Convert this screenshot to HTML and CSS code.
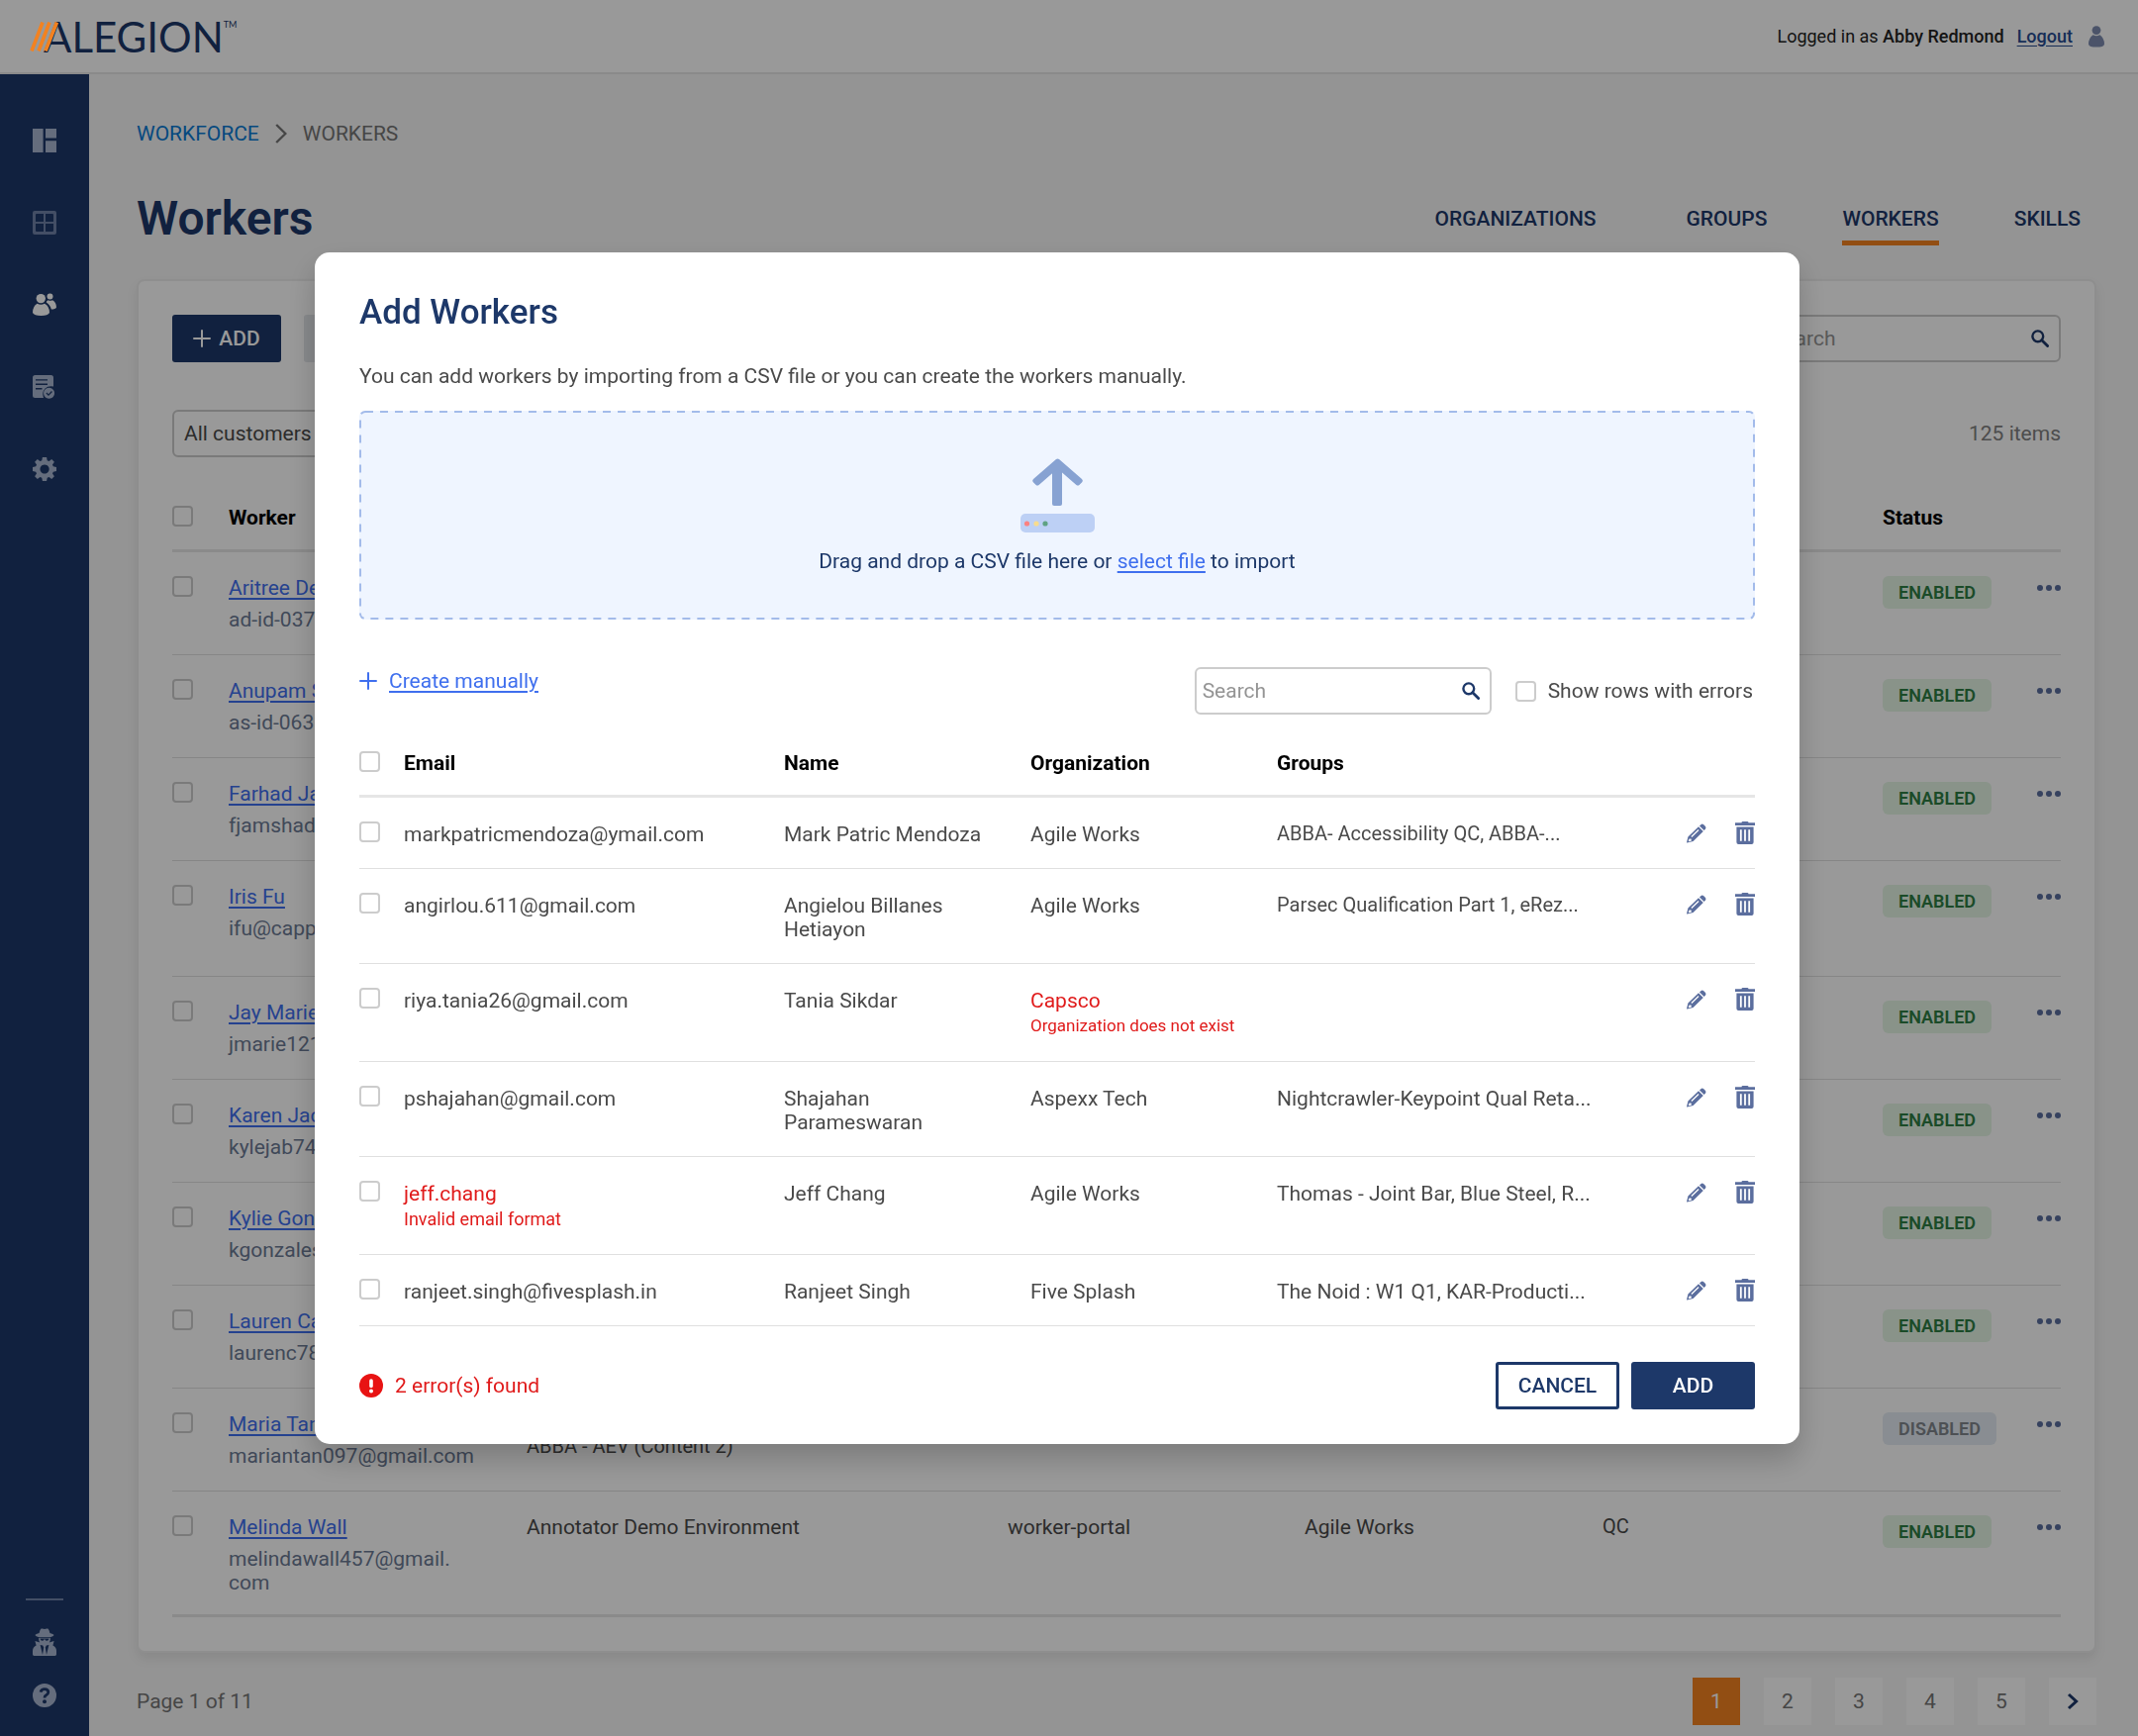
FILE: index.html
```html
<!DOCTYPE html>
<html lang="en">
<head>
    <meta charset="UTF-8">
    <meta name="viewport" content="width=device-width, initial-scale=1.0">
    <title>Alegion - Workers</title>
    <link rel="stylesheet" href="styles.css">
</head>
<body>

    <!-- Shared icons -->
    <svg class="sprite" aria-hidden="true">
        <symbol id="icon-search" viewBox="0 0 18 18">
            <circle cx="6.8" cy="6.8" r="5.4" fill="none" stroke="currentColor" stroke-width="2.4"/>
            <path d="M10.8 10.8L16.6 16.6" stroke="currentColor" stroke-width="2.8" stroke-linecap="round"/>
        </symbol>
        <symbol id="icon-plus" viewBox="0 0 18 18">
            <path d="M9 1V17M1 9H17" stroke="currentColor" stroke-width="2" stroke-linecap="round"/>
        </symbol>
        <symbol id="icon-dots" viewBox="0 0 24 6">
            <circle cx="3" cy="3" r="3"/><circle cx="12" cy="3" r="3"/><circle cx="21" cy="3" r="3"/>
        </symbol>
        <symbol id="icon-edit" viewBox="0 0 20 20">
            <path fill-rule="evenodd" d="M12 3.2L16.8 8L6.6 18L0.4 19.6L0 19.2L1.4 13.4ZM11.6 6L4.4 13L5.3 13.9L12.5 6.9ZM2.6 15.4L1.8 17.6L2.6 18.2L4.8 17.4L4.6 15.6Z"/>
            <path d="M13 2.4L14.6 .9Q15.900 0 17 1L19 3Q20 4.200 19 5.400L17.600 7Z"/>
        </symbol>
        <symbol id="icon-trash" viewBox="0 0 20 23">
            <path d="M6.5 1.2Q6.5 0 7.7 0H12.3Q13.5 0 13.5 1.2H20V4H0V1.2Z"/>
            <path fill-rule="evenodd" d="M1.4 5.6H18.6V21Q18.6 23 16.6 23H3.4Q1.4 23 1.4 21ZM4.9 8.2V19.8H6.7V8.2ZM9.1 8.2V19.8H10.9V8.2ZM13.3 8.2V19.8H15.1V8.2Z"/>
        </symbol>
    </svg>

    <header class="topbar">
        <a href="#" class="logo" aria-label="Alegion">
            <svg class="logo-slashes" width="30" height="30" viewBox="0 0 30 30">
                <path d="M2 29.500L13 .5M9 29.500L20 .5M16 29.500L27.500 .5" stroke="#f38220" stroke-width="3.600"/>
            </svg>
            <span class="logo-name">ALEGION</span>
            <span class="logo-tm">TM</span>
        </a>
        <div class="account">
            <span>Logged in as <strong>Abby Redmond</strong></span>
            <a href="#" class="logout">Logout</a>
            <svg class="avatar" width="16" height="22" viewBox="0 0 16 22">
                <circle cx="8" cy="4.6" r="4.4"/>
                <path d="M4.6 9.2Q8 11.4 11.4 9.2Q16 12.6 16 18.4Q15.6 21.6 8 21.6Q.4 21.6 0 18.4Q0 12.6 4.6 9.2Z"/>
            </svg>
        </div>
    </header>

    <div class="page">
        <nav class="sidebar" aria-label="Main">
            <a href="#" aria-label="Dashboard">
                <svg width="24" height="24" viewBox="0 0 24 24"><path d="M0 0H10.6V24H0ZM13 0H24V9.4H13ZM13 12.2H24V24H13Z"/></svg>
            </a>
            <a href="#" class="muted" aria-label="Projects">
                <svg width="24" height="24" viewBox="0 0 24 24"><path fill-rule="evenodd" d="M2 0H22Q24 0 24 2V22Q24 24 22 24H2Q0 24 0 22V2Q0 0 2 0ZM4 3Q3 3 3 4V11H11V3ZM13 3V11H21V4Q21 3 20 3ZM3 13V20Q3 21 4 21H11V13ZM13 13V21H20Q21 21 21 20V13Z"/></svg>
            </a>
            <a href="#" class="active" aria-label="Workforce">
                <svg width="24" height="24" viewBox="0 0 24 24">
                    <circle cx="8.3" cy="5.6" r="4.7"/>
                    <circle cx="17.5" cy="3.6" r="3"/>
                    <path d="M4.6 10.8Q8.3 12.6 12 10.8Q17 13.4 17 20Q15.5 23 8.5 23Q1.5 23 0 20Q0 13.4 4.6 10.8Z"/>
                    <path d="M13.8 9.6Q13.8 8 15.6 7.2Q17.8 8.4 20 7.2Q24 9.6 24 14.6Q23 16.6 18.8 16.6Q18 12.4 13.8 9.6Z"/>
                </svg>
            </a>
            <a href="#" aria-label="Tasks">
                <svg width="24" height="24" viewBox="0 0 24 24">
                    <path fill-rule="evenodd" d="M2.5 0H18.5Q21 0 21 2.5V11.6Q16 10.4 12.6 13.6Q9 17.6 11 23H2.5Q0 23 0 20.5V2.5Q0 0 2.5 0ZM3 4.2V5.6H15V4.2ZM3 8.6V10H15V8.6ZM3 13V14.4H9.5V13Z"/>
                    <path fill-rule="evenodd" d="M16.6 12.8A5.5 5.5 0 1 1 16.5 12.8ZM14.4 17.6L13.5 18.5L16 21L19.9 17L19 16.1L16 19.2Z"/>
                </svg>
            </a>
            <a href="#" aria-label="Settings">
                <svg width="24" height="24" viewBox="0 0 24 24">
                    <path fill-rule="evenodd" d="M9.9 0H14.1L14.7 3.2L16.6 4L19.2 2.1L21.9 4.8L20 7.4L20.8 9.3L24 9.9V14.1L20.8 14.7L20 16.6L21.9 19.2L19.2 21.9L16.6 20L14.7 20.8L14.1 24H9.9L9.3 20.8L7.4 20L4.8 21.9L2.1 19.2L4 16.6L3.2 14.7L0 14.1V9.9L3.2 9.3L4 7.4L2.1 4.8L4.8 2.1L7.4 4L9.3 3.2ZM12 7.4A4.6 4.6 0 1 0 12.1 7.4Z"/>
                </svg>
            </a>
            <div class="sidebar-bottom">
                <a href="#" aria-label="Impersonate">
                    <svg width="24" height="28" viewBox="0 0 24 28">
                        <path d="M8.6 .6Q10 0 12 1Q14 0 15.4 .6Q16.6 1.6 17.4 5Q21 5.8 21.6 7Q21 8.6 17.6 9.2H6.4Q3 8.6 2.4 7Q3 5.8 6.6 5Q7.4 1.6 8.6 .6Z"/>
                        <path fill-rule="evenodd" d="M6.2 10H17.8V11.6Q17.8 13 16.8 14.4L21.6 13L20.4 17.4Q24 19 24 23V26.6Q24 28 22.6 28H1.4Q0 28 0 26.6V23Q0 19 3.6 17.4L2.4 13L7.2 14.4Q6.2 13 6.2 11.6ZM7.4 10.4Q8 12.8 9.6 12.8Q11.2 12.8 11.6 11.2H12.4Q12.8 12.8 14.4 12.8Q16 12.8 16.6 10.4ZM7.6 17L10 27L11.2 19.6L10.2 17.6ZM16.4 17L14 27L12.8 19.6L13.8 17.6Z"/>
                    </svg>
                </a>
                <a href="#" aria-label="Help">
                    <svg width="24" height="24" viewBox="0 0 24 24">
                        <circle cx="12" cy="12" r="12"/>
                        <path d="M8 8.6Q8.8 5.6 12 5.6Q15.8 5.6 15.8 8.8Q15.8 10.6 13.6 11.8Q12 12.6 12 14.4" fill="none" stroke="#1d3869" stroke-width="2.8"/>
                        <circle cx="12" cy="18.2" r="2" fill="#1d3869"/>
                    </svg>
                </a>
            </div>
        </nav>

        <main class="content">
            <nav class="breadcrumb" aria-label="Breadcrumb">
                <a href="#">WORKFORCE</a>
                <svg width="12" height="20" viewBox="0 0 12 20"><path d="M1.2 1L10.4 10L1.2 19" fill="none" stroke="currentColor" stroke-width="2.4"/></svg>
                <span>WORKERS</span>
            </nav>

            <div class="title-row">
                <h1>Workers</h1>
                <nav class="tabs" aria-label="Workforce">
                    <a href="#" class="tab tab-first">ORGANIZATIONS</a>
                    <a href="#" class="tab">GROUPS</a>
                    <a href="#" class="tab current">WORKERS</a>
                    <a href="#" class="tab">SKILLS</a>
                </nav>
            </div>

            <section class="card">
                <div class="toolbar">
                    <button class="btn btn-primary btn-add"><svg width="18" height="18"><use href="#icon-plus"/></svg>ADD</button>
                    <button class="btn btn-disabled" aria-label="Edit" disabled></button>
                    <div class="search">
                        <input type="text" placeholder="Search" aria-label="Search workers">
                        <svg width="18" height="18"><use href="#icon-search"/></svg>
                    </div>
                </div>
                <div class="filters">
                    <select aria-label="Customer">
                        <option>All customers</option>
                    </select>
                    <span class="count">125 items</span>
                </div>

                <table class="workers">
                    <colgroup>
                        <col class="w-check"><col class="w-worker"><col><col class="w-portal"><col class="w-org"><col class="w-groups"><col class="w-status"><col class="w-more">
                    </colgroup>
                    <thead>
                        <tr>
                            <th><input type="checkbox" aria-label="Select all workers"></th>
                            <th>Worker</th><th>Customers</th><th>Portal</th><th>Organization</th><th>Groups</th><th>Status</th><th></th>
                        </tr>
                    </thead>
                    <tbody>
                        <tr>
                            <td><input type="checkbox" aria-label="Select Aritree Dey"></td>
                            <td><a href="#">Aritree Dey</a><p class="worker-id">ad-id-0371</p></td>
                            <td></td><td></td><td></td><td></td>
                            <td><span class="badge enabled">ENABLED</span></td>
                            <td><button class="more" aria-label="More"><svg width="24" height="6"><use href="#icon-dots"/></svg></button></td>
                        </tr>
                        <tr>
                            <td><input type="checkbox" aria-label="Select Anupam Sen"></td>
                            <td><a href="#">Anupam Sen</a><p class="worker-id">as-id-0632</p></td>
                            <td></td><td></td><td></td><td></td>
                            <td><span class="badge enabled">ENABLED</span></td>
                            <td><button class="more" aria-label="More"><svg width="24" height="6"><use href="#icon-dots"/></svg></button></td>
                        </tr>
                        <tr>
                            <td><input type="checkbox" aria-label="Select Farhad Jamshad"></td>
                            <td><a href="#">Farhad Jamshad</a><p class="worker-id">fjamshad</p></td>
                            <td></td><td></td><td></td><td></td>
                            <td><span class="badge enabled">ENABLED</span></td>
                            <td><button class="more" aria-label="More"><svg width="24" height="6"><use href="#icon-dots"/></svg></button></td>
                        </tr>
                        <tr class="tall">
                            <td><input type="checkbox" aria-label="Select Iris Fu"></td>
                            <td><a href="#">Iris Fu</a><p class="worker-id">ifu@cappen.com</p></td>
                            <td></td><td></td><td></td><td></td>
                            <td><span class="badge enabled">ENABLED</span></td>
                            <td><button class="more" aria-label="More"><svg width="24" height="6"><use href="#icon-dots"/></svg></button></td>
                        </tr>
                        <tr>
                            <td><input type="checkbox" aria-label="Select Jay Marie"></td>
                            <td><a href="#">Jay Marie</a><p class="worker-id">jmarie121</p></td>
                            <td></td><td></td><td></td><td></td>
                            <td><span class="badge enabled">ENABLED</span></td>
                            <td><button class="more" aria-label="More"><svg width="24" height="6"><use href="#icon-dots"/></svg></button></td>
                        </tr>
                        <tr>
                            <td><input type="checkbox" aria-label="Select Karen Jacobs"></td>
                            <td><a href="#">Karen Jacobs</a><p class="worker-id">kylejab74</p></td>
                            <td></td><td></td><td></td><td></td>
                            <td><span class="badge enabled">ENABLED</span></td>
                            <td><button class="more" aria-label="More"><svg width="24" height="6"><use href="#icon-dots"/></svg></button></td>
                        </tr>
                        <tr>
                            <td><input type="checkbox" aria-label="Select Kylie Gonzales"></td>
                            <td><a href="#">Kylie Gonzales</a><p class="worker-id">kgonzales</p></td>
                            <td></td><td></td><td></td><td></td>
                            <td><span class="badge enabled">ENABLED</span></td>
                            <td><button class="more" aria-label="More"><svg width="24" height="6"><use href="#icon-dots"/></svg></button></td>
                        </tr>
                        <tr>
                            <td><input type="checkbox" aria-label="Select Lauren Carter"></td>
                            <td><a href="#">Lauren Carter</a><p class="worker-id">laurenc78</p></td>
                            <td></td><td></td><td></td><td></td>
                            <td><span class="badge enabled">ENABLED</span></td>
                            <td><button class="more" aria-label="More"><svg width="24" height="6"><use href="#icon-dots"/></svg></button></td>
                        </tr>
                        <tr>
                            <td><input type="checkbox" aria-label="Select Maria Tan"></td>
                            <td><a href="#">Maria Tan</a><p class="worker-id">mariantan097@gmail.com</p></td>
                            <td class="small">ABBA - Accessibility QC<br>ABBA - AEV (Content 2)</td><td></td><td></td><td></td>
                            <td><span class="badge disabled">DISABLED</span></td>
                            <td><button class="more" aria-label="More"><svg width="24" height="6"><use href="#icon-dots"/></svg></button></td>
                        </tr>
                        <tr>
                            <td><input type="checkbox" aria-label="Select Melinda Wall"></td>
                            <td><a href="#">Melinda Wall</a><p class="worker-id">melindawall457@gmail.<wbr>com</p></td>
                            <td>Annotator Demo Environment</td><td>worker-portal</td><td>Agile Works</td><td class="small">QC</td>
                            <td><span class="badge enabled">ENABLED</span></td>
                            <td><button class="more" aria-label="More"><svg width="24" height="6"><use href="#icon-dots"/></svg></button></td>
                        </tr>
                    </tbody>
                </table>
            </section>

            <footer class="pager">
                <span>Page 1 of 11</span>
                <div class="pages">
                    <button class="page-btn current">1</button>
                    <button class="page-btn">2</button>
                    <button class="page-btn">3</button>
                    <button class="page-btn">4</button>
                    <button class="page-btn">5</button>
                    <button class="page-btn next" aria-label="Next page">
                        <svg width="12" height="18" viewBox="0 0 12 18"><path d="M2 2L9.6 9L2 16" fill="none" stroke="currentColor" stroke-width="3"/></svg>
                    </button>
                </div>
            </footer>
        </main>
    </div>

    <!-- Add workers dialog -->
    <div class="overlay">
        <div class="modal" role="dialog" aria-modal="true" aria-labelledby="modalTitle">
            <h2 id="modalTitle">Add Workers</h2>
            <p class="intro">You can add workers by importing from a CSV file or you can create the workers manually.</p>

            <div class="dropzone">
                <svg class="dropzone-border" width="100%" height="100%" aria-hidden="true"><rect width="100%" height="100%" rx="6"/></svg>
                <svg width="76" height="75" viewBox="0 0 76 75">
                    <path d="M38 5V43" stroke="#87a2d2" stroke-width="10"/>
                    <rect x="33" y="36" width="10" height="12" rx="2" fill="#87a2d2"/>
                    <path d="M37 1Q38.5 0 40 1L63 21Q64.5 22.6 63.4 24L60.4 27Q59 28.2 57.4 27L38.5 10.5L19.6 27Q18 28.2 16.6 27L13.6 24Q12.5 22.6 14 21Z" fill="#87a2d2"/>
                    <rect x="1" y="56" width="75" height="19" rx="5" fill="#bdd0f5"/>
                    <circle cx="7.5" cy="66" r="2.6" fill="#fb8181"/>
                    <circle cx="17" cy="66" r="2.6" fill="#f8dc8e"/>
                    <circle cx="26" cy="66" r="2.6" fill="#5fa283"/>
                </svg>
                <p>Drag and drop a CSV file here or <a href="#">select file</a> to import</p>
            </div>

            <div class="modal-tools">
                <a href="#" class="create"><svg width="18" height="18"><use href="#icon-plus"/></svg><span>Create manually</span></a>
                <div class="search">
                    <input type="text" placeholder="Search" aria-label="Search imported workers">
                    <svg width="18" height="18"><use href="#icon-search"/></svg>
                </div>
                <label class="errors-only"><input type="checkbox">Show rows with errors</label>
            </div>

            <table class="imported">
                <colgroup>
                    <col class="c-check"><col class="c-email"><col class="c-name"><col class="c-org"><col><col class="c-actions">
                </colgroup>
                <thead>
                    <tr>
                        <th><input type="checkbox" aria-label="Select all rows"></th>
                        <th>Email</th><th>Name</th><th>Organization</th><th>Groups</th><th></th>
                    </tr>
                </thead>
                <tbody>
                    <tr>
                        <td><input type="checkbox" aria-label="Select row"></td>
                        <td>markpatricmendoza@ymail.com</td>
                        <td>Mark Patric Mendoza</td>
                        <td>Agile Works</td>
                        <td class="small">ABBA- Accessibility QC, ABBA-...</td>
                        <td><div class="actions"><button aria-label="Edit"><svg width="20" height="20"><use href="#icon-edit"/></svg></button><button aria-label="Delete"><svg width="20" height="23"><use href="#icon-trash"/></svg></button></div></td>
                    </tr>
                    <tr>
                        <td><input type="checkbox" aria-label="Select row"></td>
                        <td>angirlou.611@gmail.com</td>
                        <td>Angielou Billanes Hetiayon</td>
                        <td>Agile Works</td>
                        <td class="small">Parsec Qualification Part 1, eRez...</td>
                        <td><div class="actions"><button aria-label="Edit"><svg width="20" height="20"><use href="#icon-edit"/></svg></button><button aria-label="Delete"><svg width="20" height="23"><use href="#icon-trash"/></svg></button></div></td>
                    </tr>
                    <tr>
                        <td><input type="checkbox" aria-label="Select row"></td>
                        <td>riya.tania26@gmail.com</td>
                        <td>Tania Sikdar</td>
                        <td class="invalid">Capsco<p class="note">Organization does not exist</p></td>
                        <td></td>
                        <td><div class="actions"><button aria-label="Edit"><svg width="20" height="20"><use href="#icon-edit"/></svg></button><button aria-label="Delete"><svg width="20" height="23"><use href="#icon-trash"/></svg></button></div></td>
                    </tr>
                    <tr>
                        <td><input type="checkbox" aria-label="Select row"></td>
                        <td>pshajahan@gmail.com</td>
                        <td>Shajahan Parameswaran</td>
                        <td>Aspexx Tech</td>
                        <td>Nightcrawler-Keypoint Qual Reta...</td>
                        <td><div class="actions"><button aria-label="Edit"><svg width="20" height="20"><use href="#icon-edit"/></svg></button><button aria-label="Delete"><svg width="20" height="23"><use href="#icon-trash"/></svg></button></div></td>
                    </tr>
                    <tr>
                        <td><input type="checkbox" aria-label="Select row"></td>
                        <td class="invalid">jeff.chang<p>Invalid email format</p></td>
                        <td>Jeff Chang</td>
                        <td>Agile Works</td>
                        <td>Thomas - Joint Bar, Blue Steel, R...</td>
                        <td><div class="actions"><button aria-label="Edit"><svg width="20" height="20"><use href="#icon-edit"/></svg></button><button aria-label="Delete"><svg width="20" height="23"><use href="#icon-trash"/></svg></button></div></td>
                    </tr>
                    <tr>
                        <td><input type="checkbox" aria-label="Select row"></td>
                        <td>ranjeet.singh@fivesplash.in</td>
                        <td>Ranjeet Singh</td>
                        <td>Five Splash</td>
                        <td>The Noid : W1 Q1, KAR-Producti...</td>
                        <td><div class="actions"><button aria-label="Edit"><svg width="20" height="20"><use href="#icon-edit"/></svg></button><button aria-label="Delete"><svg width="20" height="23"><use href="#icon-trash"/></svg></button></div></td>
                    </tr>
                </tbody>
            </table>

            <div class="modal-footer">
                <p class="error-summary">
                    <svg width="24" height="24" viewBox="0 0 24 24">
                        <circle cx="12" cy="12" r="12" fill="#e81313"/>
                        <path d="M12 7V12.5" stroke="#fff" stroke-width="3.6" stroke-linecap="round"/>
                        <circle cx="12" cy="17.4" r="2" fill="#fff"/>
                    </svg>
                    2 error(s) found
                </p>
                <button class="btn btn-outline">CANCEL</button>
                <button class="btn btn-primary">ADD</button>
            </div>
        </div>
    </div>

</body>
</html>
```
FILE: styles.css
```css
* {
    box-sizing: border-box;
}
body {
    margin: 0;
    min-height: 100vh;
    display: flex;
    flex-direction: column;
    font-family: Roboto, Arial, sans-serif;
    font-size: 21px;
    line-height: 24px;
    color: #4a4a4a;
    background-color: #f7f7f7;
}
h1, h2, p {
    margin: 0;
}
svg {
    display: block;
    fill: currentColor;
    flex-shrink: 0;
}
.sprite {
    display: none;
}
a {
    color: #3f6fee;
    text-underline-offset: 3px;
}
button, input, select {
    font: inherit;
    color: inherit;
}
button {
    padding: 0;
    border: none;
    background: none;
    cursor: pointer;
}
input[type="checkbox"] {
    appearance: none;
    display: block;
    width: 21px;
    height: 21px;
    margin: 0;
    border: 2px solid #ccc;
    border-radius: 4px;
    background: white;
}

/* Top bar */
.topbar {
    display: flex;
    justify-content: space-between;
    align-items: center;
    height: 75px;
    padding: 0 34px 0 30px;
    background: white;
    border-bottom: 2px solid #e6e6e6;
}
.logo {
    display: flex;
    align-items: center;
    color: #1d3869;
    text-decoration: none;
    font-family: Lato, sans-serif;
}
.logo-slashes {
    position: relative;
    z-index: 1;
}
.logo-name {
    margin-left: -16px;
    font-size: 42px;
    line-height: 48px;
}
.logo-tm {
    align-self: flex-start;
    font-size: 9px;
    line-height: 24px;
}
.account {
    display: flex;
    align-items: center;
    font-size: 18px;
    color: #222;
}
.account strong {
    font-weight: 500;
}
.logout {
    margin: 0 16px 0 13px;
    font-weight: 500;
    color: #274c91;
}
.avatar {
    color: #7d8bb0;
}

/* Sidebar */
.page {
    display: flex;
    flex: 1;
}
.sidebar {
    display: flex;
    flex-direction: column;
    align-items: center;
    gap: 59px;
    width: 90px;
    padding: 55px 0 30px;
    background: #1d3869;
}
.sidebar a {
    color: #a9b6d0;
}
.sidebar .muted {
    color: #7082a8;
}
.sidebar .active {
    color: white;
}
.sidebar-bottom {
    display: flex;
    flex-direction: column;
    align-items: center;
    gap: 28px;
    width: 38px;
    margin-top: auto;
    padding-top: 28px;
    border-top: 2px solid #7082a8;
}

/* Page heading */
.content {
    flex: 1;
    min-width: 0;
    padding: 48px 42px 12px 48px;
}
.breadcrumb {
    display: flex;
    align-items: center;
    gap: 16px;
    color: #757575;
}
.breadcrumb a {
    color: #0a7bd4;
    text-decoration: none;
}
.title-row {
    display: flex;
    justify-content: space-between;
    align-items: flex-end;
    margin: 46px 0 33px;
}
h1 {
    font-size: 48px;
    line-height: 56px;
    font-weight: 600;
    color: #1d3869;
}
.tabs {
    display: flex;
    gap: 76px;
    padding: 0 16px 1px 0;
}
.tab {
    padding-bottom: 10px;
    border-bottom: 5px solid transparent;
    font-weight: 500;
    color: #1d3869;
    text-decoration: none;
}
.tab-first {
    margin-right: 15px;
}
.tab.current {
    border-color: #f38220;
}

/* Workers card */
.card {
    padding: 34px;
    background: white;
    border: 2px solid #ededed;
    border-radius: 8px;
    box-shadow: 0 6px 12px rgba(0, 0, 0, 0.08);
}
.toolbar, .filters {
    display: flex;
    align-items: center;
    height: 48px;
}
.filters {
    justify-content: space-between;
    margin-top: 48px;
}
.filters select {
    width: 300px;
    height: 48px;
    padding: 0 10px;
    appearance: none;
    border: 2px solid #ccc;
    border-radius: 6px;
    background: white;
}
.count {
    color: #808080;
}
.btn {
    height: 48px;
    min-width: 125px;
    border-radius: 3px;
    font-weight: 500;
}
.btn-primary {
    background: #1d3869;
    color: white;
}
.btn-outline {
    border: 3px solid #1d3869;
    background: white;
    color: #1d3869;
}
.btn-add {
    display: flex;
    align-items: center;
    justify-content: center;
    gap: 8px;
    min-width: 110px;
}
.btn-disabled {
    margin-left: 23px;
    background: #e3e6ea;
}
.search {
    display: flex;
    align-items: center;
    width: 300px;
    height: 48px;
    padding: 0 10px 0 6px;
    border: 2px solid #ccc;
    border-radius: 6px;
    background: white;
    color: #1d3869;
}
.search input {
    flex: 1;
    min-width: 0;
    padding: 0;
    border: none;
    outline: none;
    background: none;
    color: #4a4a4a;
}
.search input::placeholder {
    color: #949494;
}
.toolbar .search {
    margin-left: auto;
}

/* Tables */
table {
    width: 100%;
    table-layout: fixed;
    border-collapse: separate;
    border-spacing: 0;
}
th {
    padding: 49px 0 20px;
    border-bottom: 3px solid #e6e6e6;
    text-align: left;
    font-weight: 700;
    color: black;
}
th, td {
    vertical-align: top;
}
td {
    padding: 24px 45px 23px 0;
    border-bottom: 1px solid #e0e0e0;
}
td:first-child, td:last-child {
    padding-right: 0;
}
.small {
    font-size: 20px;
    line-height: 23px;
}
.w-check { width: 57px; }
.w-worker { width: 301px; }
.w-portal { width: 300px; }
.w-org { width: 301px; }
.w-groups { width: 283px; }
.w-status { width: 156px; }
.w-more { width: 24px; }
.workers td:nth-child(2), .workers td:nth-child(7) {
    padding-right: 0;
}
.workers .tall {
    height: 117px;
}
.workers tr:last-child td {
    padding-bottom: 20px;
    border-bottom: 3px solid #e6e6e6;
}
.worker-id {
    margin-top: 8px;
    padding-right: 45px;
    color: #6c7a94;
}
.badge {
    display: inline-block;
    padding: 0 16px;
    border-radius: 6px;
    font-size: 18px;
    line-height: 33px;
    font-weight: 600;
}
.badge.enabled {
    background: #e4f5e5;
    color: #2d7d43;
}
.badge.disabled {
    background: #e4ecf3;
    color: #80868c;
}
.more {
    display: block;
    padding: 9px 0;
    color: #5b6e9e;
}

/* Pagination */
.pager {
    display: flex;
    justify-content: space-between;
    align-items: center;
    margin-top: 25px;
    color: #757575;
}
.pages {
    display: flex;
    gap: 24px;
}
.page-btn {
    display: flex;
    align-items: center;
    justify-content: center;
    width: 48px;
    height: 48px;
    background: white;
}
.page-btn.current {
    background: #f38220;
    color: white;
}
.page-btn.next {
    color: #1d3869;
}

/* Dialog */
.overlay {
    position: fixed;
    inset: 0;
    padding: 255px 342px 0 318px;
    background: rgba(0, 0, 0, 0.4);
    overflow: auto;
}
.modal {
    padding: 40px 45px 35px;
    background: white;
    border-radius: 15px;
    box-shadow: 0 15px 30px rgba(0, 0, 0, 0.2);
}
.modal h2 {
    font-size: 35px;
    line-height: 42px;
    font-weight: 500;
    color: #1d3869;
}
.intro {
    margin: 31px 0 23px;
}
.dropzone {
    position: relative;
    display: flex;
    flex-direction: column;
    align-items: center;
    gap: 17px;
    padding: 48px 24px 47px;
    border-radius: 6px;
    background: #eff5ff;
    color: #1d3869;
    overflow: hidden;
}
.dropzone-border {
    position: absolute;
    inset: 0;
    pointer-events: none;
}
.dropzone-border rect {
    fill: none;
    stroke: #a3bbea;
    stroke-width: 4;
    stroke-dasharray: 8 7;
}
.modal-tools {
    display: flex;
    align-items: center;
    margin-top: 48px;
    padding-right: 2px;
}
.create {
    display: flex;
    align-items: center;
    align-self: flex-start;
    gap: 12px;
    margin: 2px auto 0 0;
    text-decoration: none;
}
.create span {
    text-decoration: underline;
}
.errors-only {
    display: flex;
    align-items: center;
    gap: 12px;
    margin-left: 24px;
}
.imported th {
    padding-top: 37px;
}
.imported td {
    padding: 25px 30px 22px 0;
}
.imported td:first-child, .imported td:last-child {
    padding-top: 24px;
    padding-right: 0;
}
.c-check { width: 45px; }
.c-email { width: 384px; }
.c-name { width: 249px; }
.c-org { width: 249px; }
.c-actions { width: 80px; }
.imported .invalid {
    padding-right: 0;
    color: #e01a1a;
}
.invalid p {
    font-size: 18px;
    line-height: 27px;
}
.invalid .note {
    font-size: 17px;
}
.actions {
    display: flex;
    justify-content: flex-end;
    align-items: center;
    gap: 29px;
    height: 23px;
    color: #5b6e9e;
}
.modal-footer {
    display: flex;
    align-items: center;
    gap: 12px;
    margin-top: 36px;
}
.error-summary {
    display: flex;
    align-items: center;
    gap: 12px;
    margin-right: auto;
    color: #e01a1a;
}
```
